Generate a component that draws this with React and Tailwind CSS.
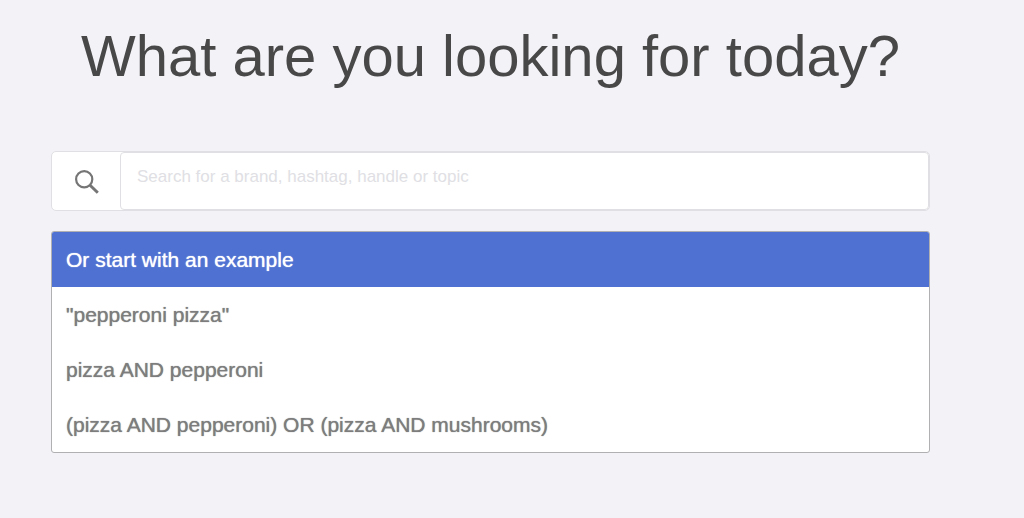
import { useState } from "react";

const examples = [
  '"pepperoni pizza"',
  "pizza AND pepperoni",
  "(pizza AND pepperoni) OR (pizza AND mushrooms)",
];

function SearchIcon() {
  return (
    <svg viewBox="0 0 24 24" className="h-6 w-6" fill="none" stroke="#757575" aria-hidden="true">
      <circle cx="9.2" cy="9.2" r="8.1" strokeWidth="2.2" />
      <path d="M14.8 15 L22.8 22.8" strokeWidth="3" />
    </svg>
  );
}

export default function App() {
  const [query, setQuery] = useState("");

  return (
    <main className="min-h-screen bg-[#f3f2f7] pt-6 pr-[94px] pb-16 pl-[51px] font-['Liberation_Sans',Arial,sans-serif]">
      <h1 className="text-center text-[58px] leading-[64px] whitespace-nowrap text-[#484848]">
        What are you looking for today?
      </h1>

      {/* Search box */}
      <form
        role="search"
        onSubmit={(e) => e.preventDefault()}
        className="mt-[63px] flex h-[60px] rounded-[5px] border border-[#e0e0e4] bg-white"
      >
        <button type="submit" aria-label="Search" className="flex w-[68px] items-center justify-center pt-0.5 pl-0.5">
          <SearchIcon />
        </button>
        <input
          type="text"
          aria-label="Search"
          value={query}
          onChange={(e) => setQuery(e.target.value)}
          placeholder="Search for a brand, hashtag, handle or topic"
          className="min-w-0 flex-1 rounded-[4px] border border-[#e0e0e4] bg-white px-4 pb-2 text-[17px] text-[#484848] outline-none placeholder:text-[#e0e0e4]"
        />
      </form>

      {/* Examples */}
      <section className="mt-5 overflow-hidden rounded-[3px] border border-[#b0b0b2] bg-white text-[21px] leading-[55px] [text-shadow:0_0_1px_currentColor]">
        <h2 className="bg-[#4f72d2] px-[14px] text-white">Or start with an example</h2>
        <ul>
          {examples.map((example) => (
            <li key={example}>
              <button
                type="button"
                onClick={() => setQuery(example)}
                className="block w-full px-[14px] text-left text-[#7d7d7d] [text-shadow:0_0_1px_currentColor]"
              >
                {example}
              </button>
            </li>
          ))}
        </ul>
      </section>
    </main>
  );
}
